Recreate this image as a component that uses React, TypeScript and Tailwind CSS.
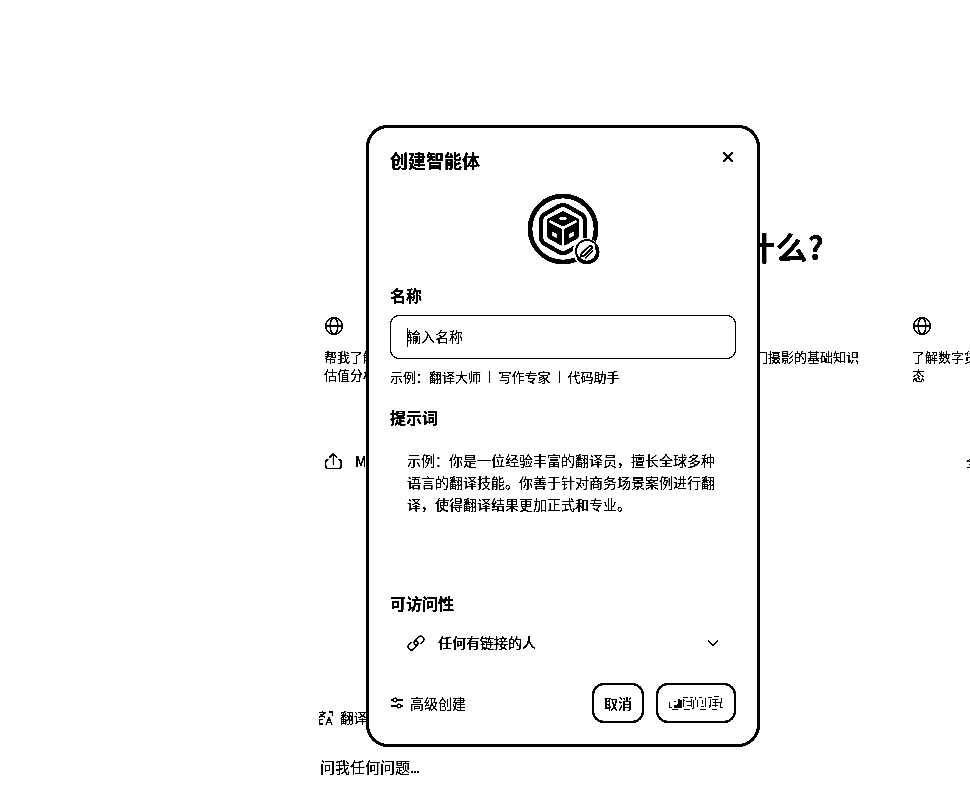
import type { ReactNode } from "react";

function Globe() {
  return (
    <svg width="20" height="20" viewBox="0 0 20 20" fill="none" stroke="black" strokeWidth="1.3">
      <circle cx="11" cy="10" r="8.3" />
      <ellipse cx="11" cy="10" rx="3.8" ry="8.3" />
      <path d="M2.7 10h16.6" />
    </svg>
  );
}

function Card({ children }: { children: ReactNode }) {
  return (
    <div className="w-[294px] shrink-0">
      <Globe />
      <div className="ml-px mt-3 text-[13px] leading-[18px] whitespace-nowrap">{children}</div>
    </div>
  );
}

function Backdrop() {
  return (
    <div className="flex h-[801px] w-[970px] flex-col overflow-hidden">
      <div className="flex h-[316px] shrink-0 justify-end pr-[146px] pt-[223px]">
        <h1 className="text-[32px] font-bold leading-[46px] whitespace-nowrap">什么?</h1>
      </div>
      <div className="flex h-[135px] shrink-0 pl-[323px]">
        <Card>帮我了解<br />估值分析</Card>
        <Card><div className="w-[241px] text-right">门摄影的基础知识</div></Card>
        <Card>了解数字货<br />态</Card>
      </div>
      <div className="flex h-[257px] shrink-0 items-start pl-[323px]">
        <svg className="shrink-0" width="20" height="20" viewBox="0 0 20 20" fill="none" stroke="black" strokeWidth="1.4">
          <path d="M10.4 14V3M6.5 6.5l3.9-3.8 3.9 3.8M5.4 8.6H5C3.4 8.8 2.6 10 2.6 11.4v3c0 2 1.2 3.2 3 3.2h9.7c1.8 0 3-1.2 3-3.2v-3c0-1.4-.8-2.6-2.4-2.8h-.5" />
        </svg>
        <span className="ml-3 w-[611px] shrink-0 text-[14px] font-medium leading-5">M</span>
        <span className="shrink-0 text-[14px] leading-5">全</span>
      </div>
      <div className="flex h-5 shrink-0 items-center pl-[318px]">
        <svg width="16" height="16" viewBox="0 0 16 16" fill="none" stroke="black" strokeWidth="1.2">
          <path d="M1 2.6h7M4.5 .8v1.8M1.2 7.5 7 3M2.2 4.5 7 7.5M10.5 2h3.8v4M4.8 9.7H1.5V14H5M8 15l3-7.5 3 7.5M9 12.5h4" />
        </svg>
        <span className="-mt-[2px] ml-1.5 text-[13.5px]">翻译</span>
      </div>
      <div className="mt-7 pl-[320px] text-[15px] leading-[22px]">问我任何问题<span className="tracking-[-1.1px]">...</span></div>
    </div>
  );
}

function Avatar() {
  return (
    <svg className="block" width="74" height="74" viewBox="0 0 74 74" fill="none" stroke="black">
      <circle cx="36" cy="36" r="33" strokeWidth="4.4" />
      <path d="M31.5 13.3Q36 10.8 40.5 13.3L54 21Q58 23.5 58 28V44Q58 48.5 54 51L40.5 58.7Q36 61.2 31.5 58.7L18 51Q14 48.5 14 44V28Q14 23.5 18 21Z" strokeWidth="4" />
      <path d="m36 18.5 15 7.5v18.6L36 53l-15-8.4V26Z" fill="black" strokeWidth="1" strokeLinejoin="round" />
      <path d="M22.5 28 36 35l13.5-7M36 35v18" stroke="white" strokeWidth="3" />
      <ellipse cx="36" cy="25.5" rx="3.8" ry="1.8" fill="white" stroke="none" />
      <path d="m25.3 38.5 4.4 2.2v4.5l-4.4-2.2ZM46.7 38.5l-4.4 2.2v4.5l4.4-2.2Z" fill="white" stroke="none" />
      <circle cx="59" cy="58.5" r="13.5" fill="white" stroke="none" />
      <circle cx="60" cy="58" r="11" strokeWidth="1.7" />
      <path d="M51 64.5A10.4 10.4 0 0 0 69 53" strokeWidth="3.4" />
      <path d="m54.5 60.5 7.5-7q3.5-2 3 1.5L57.5 62.5l-3.5 1Z" strokeWidth="1.6" />
      <path d="m58 65.5 8-8" strokeWidth="1.6" />
    </svg>
  );
}

function Dialog() {
  return (
    <section className="absolute left-[366px] top-[125px] flex h-[622px] w-[394px] flex-col rounded-[22px] border-[3px] border-black bg-white pl-[21px] pr-[21px]">
      <header className="mt-[19px] flex h-[27px] shrink-0 justify-between">
        <h2 className="text-[18px] font-semibold leading-[26px]">创建智能体</h2>
        <svg className="mr-0.5 mt-1" width="12" height="12" viewBox="0 0 12 12" stroke="black" strokeWidth="1.7">
          <path d="m1.3 1.3 9.4 9.4m0-9.4-9.4 9.4" />
        </svg>
      </header>
      <div className="ml-[137px] mt-[19px]"><Avatar /></div>
      <h3 className="mt-4 text-[16px] font-bold leading-6">名称</h3>
      <div className="mt-2 flex h-11 w-[346px] shrink-0 items-center rounded-[9px] border border-black pb-0.5 pl-4 text-[14px]">
        <span className="h-[19px] w-px translate-y-px bg-black" />
        <span className="-ml-px">输入名称</span>
      </div>
      <div className="mt-[9px] flex h-[18px] shrink-0 text-[13px] leading-[18px]">
        <span>示例：</span><span>翻译大师</span>
        <span className="flex w-[17.5px] items-center justify-center"><i className="h-3 w-px bg-black" /></span>
        <span>写作专家</span>
        <span className="flex w-[17px] items-center justify-center"><i className="h-3 w-px bg-black" /></span>
        <span>代码助手</span>
      </div>
      <h3 className="mt-[19px] text-[16px] font-bold leading-6">提示词</h3>
      <p className="ml-[17px] mt-5 h-[142px] shrink-0 text-[14px] leading-[22px] whitespace-nowrap">
        示例：你是一位经验丰富的翻译员，擅长全球多种<br />语言的翻译技能。你善于针对商务场景案例进行翻<br />译，使得翻译结果更加正式和专业。
      </p>
      <h3 className="text-[16px] font-bold leading-6">可访问性</h3>
      <div className="mt-4 flex h-[22px] shrink-0 items-center pl-[17px]">
        <svg className="mt-0.5" width="18" height="18" viewBox="0 0 18 18" fill="none" stroke="black" strokeWidth="1.5" strokeLinecap="round">
          <path d="M10.6 11.2C7.8 11.6 6.2 8.6 8 6.6l3.2-3.3c1.4-1.4 3.4-1.4 4.7-.1s1.2 3.3-.1 4.6L14 9.6M7.4 6.8c2.8-.4 4.4 2.6 2.6 4.6l-3.2 3.3c-1.4 1.4-3.4 1.4-4.7.1s-1.2-3.3.1-4.6L4 8.4" />
        </svg>
        <span className="ml-[13px] text-[14px] font-medium leading-[22px]">任何有链接的人</span>
        <svg className="ml-auto mr-[17px] mt-0.5" width="12" height="8" viewBox="0 0 12 8" fill="none" stroke="black" strokeWidth="1.2"><path d="m1 1.5 5 5 5-5" /></svg>
      </div>
      <footer className="mt-[30px] flex h-10 shrink-0 items-center">
        <svg width="14" height="12" viewBox="0 0 14 12" fill="none" stroke="black" strokeWidth="1.3">
          <path d="M1 3h2.3m3.8 0H13M1 9h5.9m3.8 0H13" /><circle cx="5.2" cy="3" r="1.8" /><circle cx="8.8" cy="9" r="1.8" />
        </svg>
        <span className="ml-1.5 text-[14px]">高级创建</span>
        <button className="ml-auto h-10 w-[52px] rounded-[12px] border-2 border-black text-[14px] font-medium">取消</button>
        <button className="ml-3 h-10 w-20 rounded-[12px] border-2 border-black">
          <svg className="mx-auto" width="60" height="20" viewBox="0 0 60 20">
            <text x="2" y="15" fontSize="14" fontWeight="500" fill="white">立即创建</text>
            <g fill="none" stroke="black" strokeWidth="1" shapeRendering="crispEdges">
              <path d="M3.5 9v5h2M6 16.5h6M8 13.5h3v-3M8 8.5h2M12 6.5h2M17 4.5h5M24 4.5h3M17.5 6v8M18.5 7v1M20 8.5h5v3M20.5 12.5h4M18 16.5h6M25.5 6v8M29.5 4v3M27.5 7v8h-2M31.5 7v7M33 4.5h3M36.5 7v4M35 13.5h3M34 16.5h6M39.5 5v9M42 4.5h4M48 3.5h5M55.5 5v4M44.5 6v8M46 6.5h6M47 9.5h9M49.5 6v8M46 12.5h6M43.5 12v3M46 16.5h5M54 14.5h3M54.5 9v5" />
            </g>
            <path d="M12 7h4v8h-4ZM8 12h4v3H8Z" fill="black" />
          </svg>
        </button>
      </footer>
    </section>
  );
}

export default function App() {
  return (
    <main lang="zh-CN" className="relative h-[801px] w-[970px] overflow-hidden bg-white font-['Noto_Sans_CJK_SC',sans-serif] text-black [filter:brightness(0.78)_contrast(8)]">
      <Backdrop />
      <Dialog />
    </main>
  );
}
